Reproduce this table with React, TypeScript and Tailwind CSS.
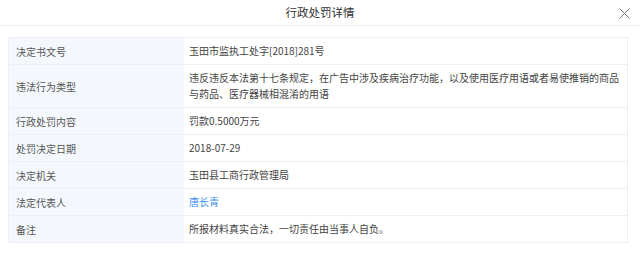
const rows: { label: string; value: string; link?: boolean }[] = [
  { label: '决定书文号', value: '玉田市监执工处字[2018]281号' },
  {
    label: '违法行为类型',
    value:
      '违反违反本法第十七条规定，在广告中涉及疾病治疗功能，以及使用医疗用语或者易使推销的商品与药品、医疗器械相混淆的用语',
  },
  { label: '行政处罚内容', value: '罚款0.5000万元' },
  { label: '处罚决定日期', value: '2018-07-29' },
  { label: '决定机关', value: '玉田县工商行政管理局' },
  { label: '法定代表人', value: '唐长青', link: true },
  { label: '备注', value: '所报材料真实合法，一切责任由当事人自负。' },
];

export default function App() {
  return (
    <div
      className="w-[640px] h-[255px] bg-white text-[10px]"
      style={{ fontFamily: '"Noto Sans CJK SC", "Noto Sans", sans-serif' }}
    >
      <div className="relative flex h-[26px] items-center justify-center border-b border-[#eef2f6]">
        <span className="text-[11.5px] text-[#333]">行政处罚详情</span>
        <svg
          className="absolute right-[10px] top-[8px]"
          width="11"
          height="11"
          viewBox="0 0 11 11"
          fill="none"
          stroke="#777"
          strokeWidth="1"
          aria-label="关闭"
        >
          <path d="M0.5 0.5L10.5 10.5M10.5 0.5L0.5 10.5" />
        </svg>
      </div>

      <div className="pl-[8px] pr-[12px] pt-[11px]">
        <div className="border border-[#eaf0f6]">
          {rows.map((row, i) => (
            <div
              key={row.label}
              className={`flex ${i > 0 ? 'border-t border-[#eaf0f6]' : ''}`}
            >
              <div className="flex w-[175px] shrink-0 items-center bg-[#f4f8fc] pl-[7px] text-[#555]">
                {row.label}
              </div>
              <div
                className={`flex-1 py-[5px] pl-[5px] pr-[2px] leading-[16px] ${
                  row.link ? 'text-[#3b8ef0]' : 'text-[#444]'
                }`}
              >
                {row.value}
              </div>
            </div>
          ))}
        </div>
      </div>
    </div>
  );
}
